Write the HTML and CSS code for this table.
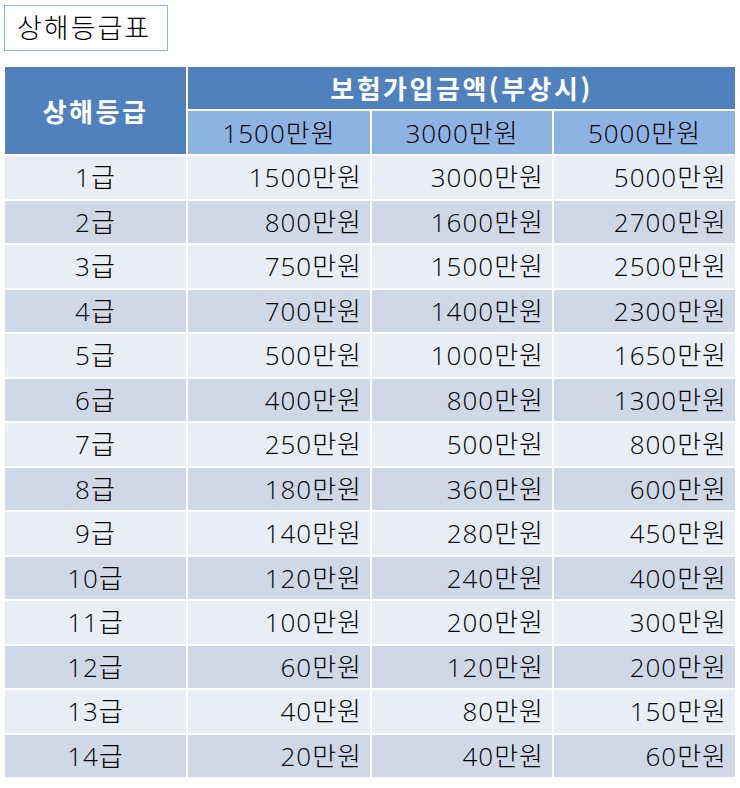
FILE: index.html
```html
<!DOCTYPE html>
<html lang="ko">
<head>
<meta charset="utf-8">
<title>상해등급표</title>
<link rel="stylesheet" href="styles.css">
</head>
<body>
<div class="title">상해등급표</div>
<table class="grade">
  <colgroup>
    <col class="c1"><col class="c2"><col class="c3"><col class="c4">
  </colgroup>
  <thead>
    <tr class="h1">
      <th rowspan="2" class="main">상해등급</th>
      <th colspan="3" class="main">보험가입금액(부상시)</th>
    </tr>
    <tr class="h2">
      <th class="sub">1500만원</th>
      <th class="sub">3000만원</th>
      <th class="sub">5000만원</th>
    </tr>
  </thead>
  <tbody>
    <tr><td>1급</td><td>1500만원</td><td>3000만원</td><td>5000만원</td></tr>
    <tr><td>2급</td><td>800만원</td><td>1600만원</td><td>2700만원</td></tr>
    <tr><td>3급</td><td>750만원</td><td>1500만원</td><td>2500만원</td></tr>
    <tr><td>4급</td><td>700만원</td><td>1400만원</td><td>2300만원</td></tr>
    <tr><td>5급</td><td>500만원</td><td>1000만원</td><td>1650만원</td></tr>
    <tr><td>6급</td><td>400만원</td><td>800만원</td><td>1300만원</td></tr>
    <tr><td>7급</td><td>250만원</td><td>500만원</td><td>800만원</td></tr>
    <tr><td>8급</td><td>180만원</td><td>360만원</td><td>600만원</td></tr>
    <tr><td>9급</td><td>140만원</td><td>280만원</td><td>450만원</td></tr>
    <tr><td>10급</td><td>120만원</td><td>240만원</td><td>400만원</td></tr>
    <tr><td>11급</td><td>100만원</td><td>200만원</td><td>300만원</td></tr>
    <tr><td>12급</td><td>60만원</td><td>120만원</td><td>200만원</td></tr>
    <tr><td>13급</td><td>40만원</td><td>80만원</td><td>150만원</td></tr>
    <tr><td>14급</td><td>20만원</td><td>40만원</td><td>60만원</td></tr>
  </tbody>
</table>
</body>
</html>
```
FILE: styles.css
```css
html, body {
  margin: 0;
  padding: 0;
  background: #ffffff;
}
body {
  font-family: "Open Sans", "Noto Sans CJK KR", "Noto Sans", sans-serif;
  color: #000000;
}
.title {
  display: inline-block;
  box-sizing: border-box;
  margin: 5px 0 0 4px;
  width: 164px;
  height: 46px;
  border: 1px solid #8db3e2;
  padding-left: 12px;
  font-size: 27px;
  font-weight: 300;
  letter-spacing: 2px;
  line-height: 43px;
  vertical-align: top;
  white-space: nowrap;
}
.grade {
  display: table;
  margin: 14px 0 0 3px;
  border-collapse: separate;
  border-spacing: 2px;
  table-layout: fixed;
  width: 734px;
  font-size: 26px;
  font-weight: 300;
  letter-spacing: 1px;
  line-height: 1;
}
.c1 { width: 181px; }
.c2 { width: 182px; }
.c3 { width: 180px; }
.c4 { width: 181px; }
.grade th, .grade td {
  padding: 0 8px 0 12px;
  vertical-align: middle;
  white-space: nowrap;
}
.grade th.main {
  background: #4f81bd;
  color: #ffffff;
  font-family: "Noto Sans CJK KR", sans-serif;
  font-weight: 700;
  letter-spacing: 2.5px;
  text-align: center;
  padding: 0 12px;
}
.h1 th { height: 42px; }
.grade th.sub {
  height: 43px;
  background: #8db3e2;
  font-weight: 300;
  letter-spacing: 1px;
  color: #000000;
  text-align: center;
  padding: 0 12px;
}
.grade td {
  height: 42.5px;
  text-align: right;
}
.grade td:first-child {
  text-align: center;
  padding: 0 12px;
}
.grade tbody tr:nth-child(odd) td { background: #e9edf4; }
.grade tbody tr:nth-child(even) td { background: #d0d8e8; }
```
